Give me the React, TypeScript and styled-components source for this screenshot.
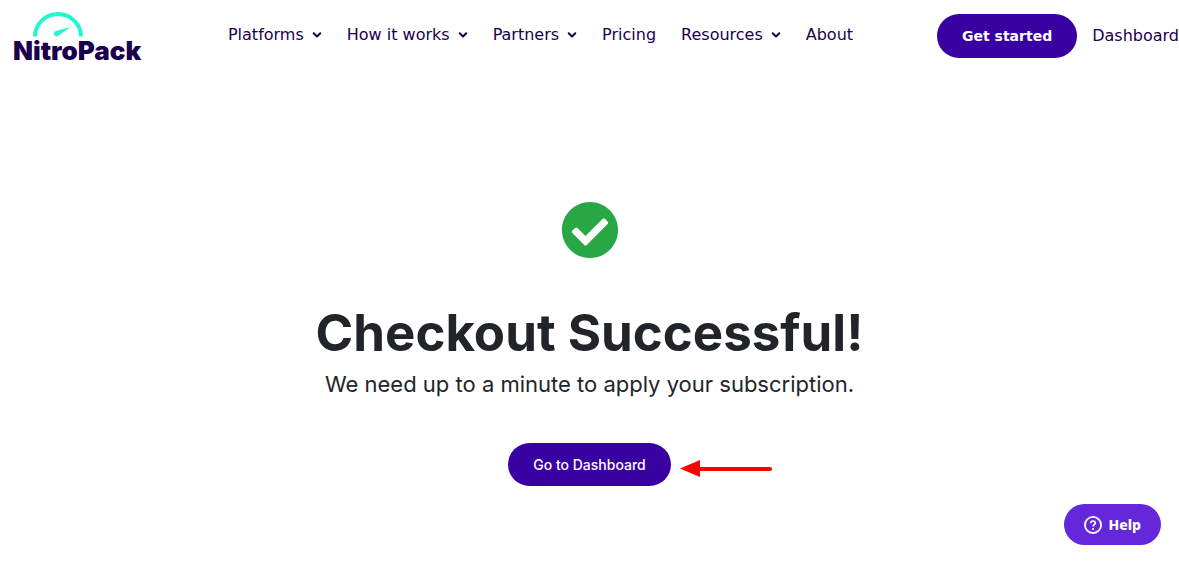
import React from "react";
import styled, { createGlobalStyle } from "styled-components";
import { FaCheckCircle } from "react-icons/fa";

const colors = {
  ink: "#1b004e",
  primary: "#3900a2",
  help: "#6427dc",
  teal: "#22f7d2",
  success: "#28a745",
  text: "#212529",
  arrow: "#ff0000",
};

const GlobalStyle = createGlobalStyle`
  *, *::before, *::after { box-sizing: border-box; }
  body {
    margin: 0;
    background: #fff;
    color: ${colors.text};
    font-family: "DejaVu Sans", sans-serif;
  }
  a { text-decoration: none; color: inherit; }
`;

const Header = styled.header`
  display: flex;
  align-items: flex-start;
  justify-content: space-between;
  padding: 10px 0 0 12px;
`;

const LogoLink = styled.a`
  display: block;
  width: 132px;
  height: 62px;
`;

const Nav = styled.nav`
  padding-top: 13px;
`;

const NavList = styled.ul`
  display: flex;
  gap: 25px;
  margin: 0;
  padding: 0;
  list-style: none;
`;

const NavButton = styled.button`
  display: flex;
  align-items: center;
  gap: 8px;
  padding: 0;
  border: 0;
  background: none;
  color: ${colors.ink};
  font: 16px/24px "DejaVu Sans", sans-serif;
  cursor: pointer;
`;

const NavLink = styled.a`
  display: block;
  color: ${colors.ink};
  font-size: 16px;
  line-height: 24px;
`;

const Account = styled.div`
  display: flex;
  align-items: center;
  gap: 15px;
  padding-top: 4px;
`;

const PillLink = styled.a<{ $size: "small" | "large" }>`
  display: flex;
  align-items: center;
  justify-content: center;
  height: ${(p) => (p.$size === "large" ? 44 : 43)}px;
  padding: 0 25px;
  border-radius: 22px;
  background: ${colors.primary};
  color: #fff;
  font-family: ${(p) => (p.$size === "large" ? '"DejaVu Sans"' : "Inter")}, sans-serif;
  font-weight: ${(p) => (p.$size === "large" ? 700 : 500)};
  font-size: 14px;
`;

const Main = styled.main`
  display: flex;
  flex-direction: column;
  align-items: center;
  padding: 129px 20px 40px;
  text-align: center;
`;

const Title = styled.h1`
  margin: 45px 0 0;
  font-family: Inter, sans-serif;
  font-size: 51px;
  line-height: 58px;
  font-weight: 700;
`;

const Message = styled.p`
  margin: 8px 0 45px;
  font-family: Inter, sans-serif;
  font-size: 22px;
  line-height: 28px;
`;

const Action = styled.div`
  position: relative;
`;

const Pointer = styled.svg`
  position: absolute;
  left: calc(100% + 9px);
  top: 16px;
`;

const HelpButton = styled.button`
  position: fixed;
  right: 18px;
  bottom: 35px;
  display: flex;
  align-items: center;
  gap: 7px;
  height: 41px;
  padding: 1px 20px 0;
  border: 0;
  border-radius: 21px;
  background: ${colors.help};
  color: #fff;
  font: 800 14px/20px "Noto Sans", sans-serif;
  cursor: pointer;
`;

const Logo = () => (
  <svg width="132" height="62" viewBox="12 10 132 62" role="img" aria-label="NitroPack">
    <path d="M35 36.5A23 22.5 0 0 1 81 36.5" fill="none" stroke={colors.teal} strokeWidth="4" />
    <path d="M70.5 27 59 35.3Q56 37.5 54.2 35.3Q52.7 32 56.5 30.8Z" fill={colors.teal} />
    <text
      x="13"
      y="60"
      fill={colors.ink}
      fontFamily="Inter, sans-serif"
      fontSize="26"
      fontWeight="900"
    >
      NitroPack
    </text>
  </svg>
);

const Chevron = () => (
  <svg width="10" height="8" viewBox="0 0 10 8" aria-hidden="true">
    <path
      d="M1.7 2.2 5 5.5 8.3 2.2"
      fill="none"
      stroke="currentColor"
      strokeWidth="2"
      strokeLinecap="round"
      strokeLinejoin="round"
    />
  </svg>
);

const QuestionIcon = () => (
  <svg width="18" height="18" viewBox="0 0 18 18" fill="none" stroke="currentColor" aria-hidden="true">
    <circle cx="9" cy="9" r="8.1" strokeWidth="1.8" />
    <path d="M6.7 7.2C6.7 4.3 11.3 4.3 11.3 7.1C11.3 8.7 9 8.8 9 10.6" strokeWidth="1.7" />
    <circle cx="9" cy="12.9" r="1" fill="currentColor" stroke="none" />
  </svg>
);

const menu = [
  { label: "Platforms", expands: true },
  { label: "How it works", expands: true },
  { label: "Partners", expands: true },
  { label: "Pricing", expands: false },
  { label: "Resources", expands: true },
  { label: "About", expands: false },
];

export default function App() {
  return (
    <>
      <GlobalStyle />
      <Header>
        <LogoLink href="#home">
          <Logo />
        </LogoLink>
        <Nav aria-label="Main">
          <NavList>
            {menu.map(({ label, expands }) => (
              <li key={label}>
                {expands ? (
                  <NavButton type="button" aria-haspopup="true">
                    {label}
                    <Chevron />
                  </NavButton>
                ) : (
                  <NavLink href={`#${label.toLowerCase()}`}>{label}</NavLink>
                )}
              </li>
            ))}
          </NavList>
        </Nav>
        <Account>
          <PillLink $size="large" href="#start">
            Get started
          </PillLink>
          <NavLink href="#dashboard">Dashboard</NavLink>
        </Account>
      </Header>
      <Main>
        <FaCheckCircle size={58} color={colors.success} aria-hidden="true" />
        <Title>Checkout Successful!</Title>
        <Message>We need up to a minute to apply your subscription.</Message>
        <Action>
          <PillLink $size="small" href="#dashboard">
            Go to Dashboard
          </PillLink>
          <Pointer width="93" height="18" viewBox="0 0 93 18" aria-hidden="true">
            <path d="M0 9.5 20 1V18Z" fill={colors.arrow} />
            <path d="M19 10H90" stroke={colors.arrow} strokeWidth="4" strokeLinecap="round" />
          </Pointer>
        </Action>
      </Main>
      <HelpButton type="button">
        <QuestionIcon />
        Help
      </HelpButton>
    </>
  );
}
